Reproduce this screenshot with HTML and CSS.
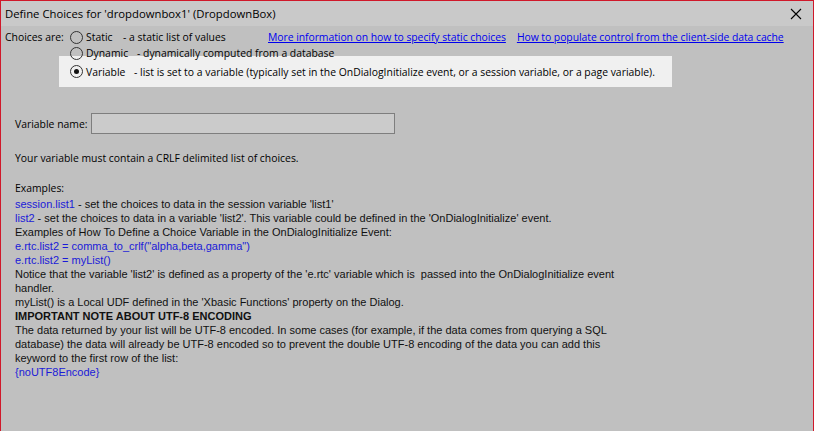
FILE: index.html
```html
<!DOCTYPE html>
<html>
<head>
<meta charset="utf-8">
<link rel="stylesheet" href="styles.css">
</head>
<body>
<div class="window">
  <div class="titlebar">
    <span class="title">Define Choices for 'dropdownbox1' (DropdownBox)</span>
    <svg class="close" width="12" height="12" viewBox="0 0 12 12"><path d="M1 1 L11 11 M11 1 L1 11" stroke="#000" stroke-width="1.1" fill="none"/></svg>
  </div>
  <div class="content">
    <div class="choices">
      <div class="row">
        <span class="choices-label">Choices are:</span>
        <span class="radio"></span>
        <span class="opt opt-static">Static</span>
        <span class="desc desc-static">- a static list of values</span>
        <a class="link">More information on how to specify static choices</a>
        <a class="link link-second">How to populate control from the client-side data cache</a>
      </div>
      <div class="row row-indent">
        <span class="radio"></span>
        <span class="opt opt-dynamic">Dynamic</span>
        <span class="desc">- dynamically computed from a database</span>
      </div>
      <div class="row row-selected">
        <span class="radio checked"></span>
        <span class="opt opt-variable">Variable</span>
        <span class="desc">- list is set to a variable (typically set in the OnDialogInitialize event, or a session variable, or a page variable).</span>
      </div>
    </div>
    <div class="varname">
      <span class="varname-label">Variable name:</span>
      <span class="input"></span>
    </div>
    <p class="ui-text note">Your variable must contain a CRLF delimited list of choices.</p>
    <p class="ui-text examples-head">Examples:</p>
    <div class="examples">
      <div><span class="blue">session.list1</span> - set the choices to data in the session variable 'list1'</div>
      <div><span class="blue">list2</span> - set the choices to data in a variable 'list2'. This variable could be defined in the 'OnDialogInitialize' event.</div>
      <div>Examples of How To Define a Choice Variable in the OnDialogInitialize Event:</div>
      <div class="blue">e.rtc.list2 = comma_to_crlf("alpha,beta,gamma")</div>
      <div class="blue">e.rtc.list2 = myList()</div>
      <div>Notice that the variable 'list2' is defined as a property of the 'e.rtc' variable which is&nbsp; passed into the OnDialogInitialize event<br>handler.</div>
      <div>myList() is a Local UDF defined in the 'Xbasic Functions' property on the Dialog.</div>
      <div class="bold">IMPORTANT NOTE ABOUT UTF-8 ENCODING</div>
      <div>The data returned by your list will be UTF-8 encoded. In some cases (for example, if the data comes from querying a SQL<br>database) the data will already be UTF-8 encoded so to prevent the double UTF-8 encoding of the data you can add this<br>keyword to the first row of the list:</div>
      <div class="blue">{noUTF8Encode}</div>
    </div>
  </div>
</div>
</body>
</html>
```

FILE: styles.css
```css
html, body {
  margin: 0;
  padding: 0;
  height: 100%;
  overflow: hidden;
  background: #c0c0c0;
}
.window {
  box-sizing: border-box;
  width: 814px;
  height: 431px;
  border: 1px solid #d0182a;
  border-bottom: none;
  background: #c0c0c0;
  display: flex;
  flex-direction: column;
  font-family: "Open Sans", "Noto Sans", sans-serif;
  font-size: 10.4px;
  color: #000;
}
.titlebar {
  height: 25px;
  background: #c9c9c9;
  display: flex;
  align-items: center;
  justify-content: space-between;
  padding: 0 11px 0 4px;
  flex-shrink: 0;
}
.title {
  font-size: 11.3px;
  white-space: nowrap;
}
.close {
  display: block;
}
.content {
  flex: 1;
  padding: 3px 0 0 4px;
}
.choices {
  display: flex;
  flex-direction: column;
}
.row {
  display: flex;
  align-items: center;
  height: 16px;
  white-space: nowrap;
}
.row > * {
  flex-shrink: 0;
}
.choices-label {
  width: 65px;
}
.row-indent {
  margin-left: 65px;
  position: relative;
  z-index: 1;
}
.row-selected {
  box-sizing: border-box;
  margin-left: 54px;
  margin-top: -5px;
  padding-left: 11px;
  width: 613px;
  height: 31px;
  background: #f0f0f0;
}
.radio {
  box-sizing: border-box;
  width: 13px;
  height: 13px;
  border: 1px solid #333;
  border-radius: 50%;
  margin-right: 3px;
  display: flex;
  align-items: center;
  justify-content: center;
}
.radio.checked::after {
  content: "";
  width: 5px;
  height: 5px;
  border-radius: 50%;
  background: #111;
}
.opt-static { width: 37px; }
.opt-dynamic { width: 51px; }
.opt-variable { width: 48px; }
.desc-static { width: 145px; }
.link {
  color: #0000ee;
  text-decoration: underline;
  letter-spacing: -0.05px;
}
.link-second {
  margin-left: 11px;
}
.varname {
  display: flex;
  align-items: center;
  margin: 26px 0 0 10px;
  white-space: nowrap;
}
.varname-label {
  width: 76px;
  flex-shrink: 0;
}
.input {
  box-sizing: border-box;
  width: 304px;
  height: 21px;
  border: 1px solid #7e7e7e;
  background: #cbcbcb;
}
.ui-text {
  margin: 0 0 0 10px;
  line-height: 16px;
  white-space: nowrap;
}
.note {
  margin-top: 16px;
}
.examples-head {
  margin-top: 14px;
}
.examples {
  margin-left: 10px;
  margin-top: 1px;
  font-family: "Liberation Sans", Arial, sans-serif;
  font-size: 11px;
  line-height: 14px;
  color: #111;
  white-space: nowrap;
}
.blue {
  color: #1a1ad8;
}
.bold {
  font-weight: bold;
}
```
